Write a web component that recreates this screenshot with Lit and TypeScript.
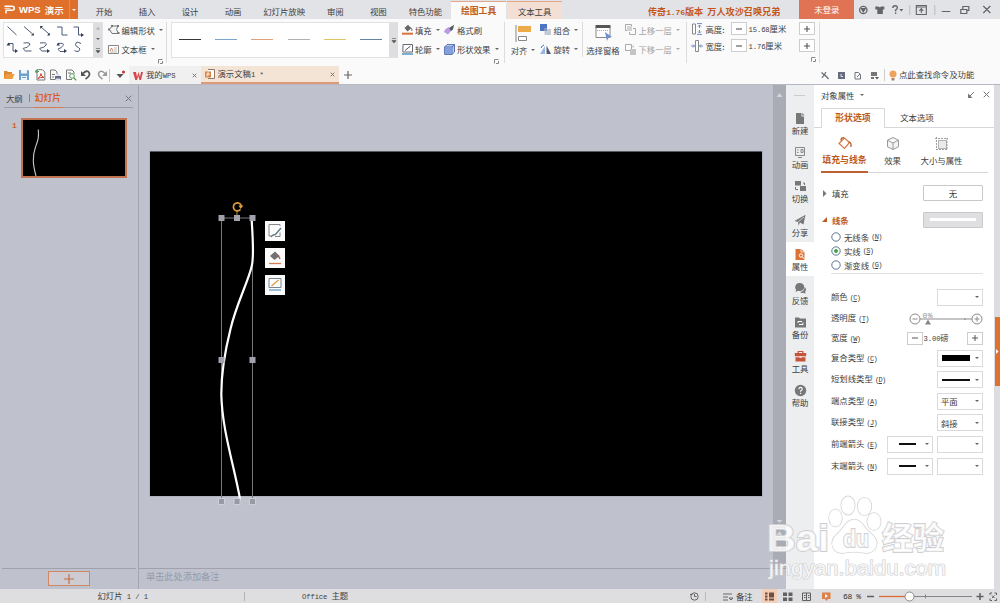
import { LitElement, html, svg, css } from "lit";
import { customElement } from "lit/decorators.js";
import { classMap } from "lit/directives/class-map.js";

const icon = (w: number, h: number, body: unknown) =>
  html`<svg class="ic" width=${w} height=${h} viewBox="0 0 ${w} ${h}">${body}</svg>`;
const caret = html`<i class="caret"></i>`;
const m = (text: string) => html`<span class="m">${text}</span>`;
const key = (k: string) => html`<span class="key">(<u>${k}</u>)</span>`;

const launcher = icon(5, 5, svg`<path d="M.5 4.5V.5h4M4.5 2v2.5H2" stroke="#888" fill="none"/>`);
const closeIcon = (s: number) => icon(s, s, svg`<path d="M.7 .7L${s - 0.7} ${s - 0.7}M${s - 0.7} .7L.7 ${s - 0.7}" stroke="#777" fill="none"/>`);
const bucket = svg`<path d="M2.5 4L6 .8l3.2 3.4L5.6 7.6z" fill="#666"/><path d="M8.5 3.5Q10.5 5 9.8 7" stroke="#666" fill="none"/>`;

const RIBBON_TABS = ["开始", "插入", "设计", "动画", "幻灯片放映", "审阅", "视图", "特色功能"];
const LINE_COLORS = ["#33363b", "#7ba6cb", "#dda37e", "#b0b0b0", "#dfc566", "#6283a3"];

const QUICK_ICONS = [
  svg`<path d="M1 10V2h3l1 1h4v2" fill="#d98a32"/><path d="M1 10L3 5h8.500L9.500 10z" fill="#ee9c3f"/>`,
  svg`<path d="M1 1h9l1 1v9H1z" fill="#6da0cd"/><path d="M3 1h6v3.500H3zM3 7h6v4H3z" fill="#eef5fb"/><path d="M4 8.500h4" stroke="#6da0cd"/>`,
  svg`<path d="M3 .7h5.500l2.300 2.300v8H3z" fill="#fff" stroke="#777"/><path d="M1 2.500h4M1 2.500l2-1.500v3z" stroke="#5a9e60" fill="#5a9e60"/><path d="M4 9.500Q7 7 7 4.500Q7 7.500 10 8.500Q6 8 4 9.500" stroke="#cf4635" fill="none"/>`,
  svg`<path d="M6 10.500H1.500V1H6l2 2v2M3 5.500h3M3 8h2" stroke="#777" fill="none"/><path d="M6 7h6v3.500H6z" fill="#646b85"/><path d="M7.500 5h3v2h-3zM7 9.500h4v2H7z" fill="#dfe2ec"/>`,
  svg`<path d="M7 10.500H1.500V1H7l2 2v2M3 4h3" stroke="#777" fill="none"/><circle cx="7" cy="7" r="2.300" fill="#fff" stroke="#579a5d"/><path d="M8.700 8.700l2.500 2.500" stroke="#579a5d" stroke-width="1.300"/>`,
  svg`<path d="M3 4.500Q7 .5 9 3.500T5.500 10" stroke="#555" stroke-width="1.800" fill="none"/><path d="M1 2v5h5z" fill="#555"/>`,
  svg`<path d="M9 4.500Q5 .5 3 3.500T6.500 10" stroke="#999" stroke-width="1.500" fill="none"/><path d="M11 2v5H6z" fill="#999"/>`,
];

const SIDE_ITEMS: { label: string; on?: boolean; art: unknown }[] = [
  { label: "新建", art: svg`<path d="M2 1h5.500v3.500H10V12H2z" fill="#777"/><path d="M8.300 .8L10.500 3.500H8.300z" fill="#777"/>` },
  { label: "动画", art: svg`<path d="M1.500 1.500h9v8h-9z" stroke="#888" fill="none"/><path d="M3 4h1.500M3 6.500h1.500M7 3.500h2v3H7zM4 11.500h4" stroke="#888" fill="none"/>` },
  { label: "切换", art: svg`<path d="M1 1h6v4.500H1z" fill="#777"/><path d="M6 6h6v5H6z" fill="#777"/><path d="M9 3h1.500v2M1.500 7v2.500H4" stroke="#777" fill="none"/>` },
  { label: "分享", art: svg`<path d="M.5 7L11.500 .8 9.500 10.500 6 8.500 4.500 11.500 4 8z" fill="#777"/><path d="M4 8L10 3" stroke="#eee" stroke-width=".7"/>` },
  { label: "属性", on: true, art: svg`<path d="M1.500 1h5.500l3.500 3v8h-9z" fill="#dd7238"/><path d="M7 1v3h3.500" stroke="#fff" stroke-width=".7" fill="none"/><circle cx="7" cy="7.500" r="1.700" stroke="#fff" fill="none"/><path d="M8.500 9l2.500 2.500" stroke="#fff"/>` },
  { label: "反馈", art: svg`<path d="M5.500 1a4.500 4 0 1 1-1.500 7.700L1.500 10l.6-2.500A4 4 0 0 1 5.500 1z" fill="#777"/><path d="M10.500 5q2.500 2 .7 4.700l.3 2-2-.9q-2 .5-3.500-.7 4.500-.6 4.500-5.100z" fill="#777"/>` },
  { label: "备份", art: svg`<path d="M1 1.500h4l1 1h6v9H1z" fill="#777"/><path d="M4 7V5.500h4M9 6.500V8.500H5" stroke="#fff" fill="none"/>` },
  { label: "工具", art: svg`<path d="M4.200 3V1.500h4.600V3" stroke="#c4543a" fill="none" stroke-width="1.200"/><path d="M.8 3h11.400v3.300H.8zM1.500 7.200h10v4.300h-10z" fill="#c4543a"/><path d="M5.500 6h2v2h-2z" fill="#f4d9d2"/>` },
  { label: "帮助", art: svg`<circle cx="6.500" cy="6.500" r="5.700" fill="#777"/><path d="M4.800 5.200Q5 3.400 6.600 3.400T8.300 5Q8.200 6 6.600 6.900v.9M6.600 8.700v1.400" stroke="#fff" fill="none" stroke-width="1.100"/>` },
];

@customElement("app-root")
export class AppRoot extends LitElement {
  static styles = css`
    :host { display: flex; flex-direction: column; width: 1000px; height: 603px; overflow: hidden; position: relative;
      font: 8.4px/12px "Noto Sans CJK SC", sans-serif; color: #3e3e40; background: #fafafa; white-space: nowrap; }
    * { box-sizing: border-box; }
    .ic { display: block; flex: none; overflow: visible; }
    .m { font-family: "Liberation Mono", "Noto Sans CJK SC", monospace; font-size: 7.2px; letter-spacing: -.1px; }
    .key { font-family: "Liberation Mono", monospace; font-size: 7px; letter-spacing: -.7px; margin-left: 2px; }
    .caret { display: block; flex: none; width: 0; height: 0; border: 2px solid transparent; border-top: 2.500px solid #666; border-bottom: 0; }
    .row, .titlebar, .tab { display: flex; align-items: center; }
    .dim { color: #a5a5a7; }
    .titlebar { height: 19px; flex: none; background: #e2e3e7; align-items: stretch; }
    .brand { width: 78px; margin-right: 4.500px; background: #df702b; color: #fff; display: flex; align-items: center; padding-left: 4px; gap: 4px; font-weight: 500; font-size: 9.500px; }
    .wps { font-family: "Liberation Sans", sans-serif; font-weight: 700; font-size: 9.500px; }
    .drop { width: 9px; height: 19px; margin-left: auto; border-left: 1px solid #e88a51; display: flex; align-items: center; justify-content: center; }
    .drop .caret { border-top-color: #fff; }
    .tab { min-width: 43px; padding: 2px 8.750px 0; justify-content: center; }
    .tool { width: 55.500px; padding: 0; margin-top: 1px; border-top: 1px solid #e3a688; background: #f4dfd5; margin-right: .5px; }
    .tool.on { background: #fafafa; color: #c05f20; font-weight: 700; font-size: 8.800px; }
    .promo { margin: 4px 0 0 85px; width: 151.500px; color: #c4561b; font-weight: 700; font-size: 9.150px; line-height: 14px; }
    .promo .m { font-size: 8px; }
    .login { width: 55px; background: #e07354; color: #fff; display: flex; align-items: center; justify-content: center; padding-bottom: 2px; }
    .win { flex: 1; }
    .ribbon { height: 47px; flex: none; display: flex; align-items: flex-start; padding-top: 3px; }
    .sep { width: 1px; height: 41px; background: #dcdcde; flex: none; }
    .sep.short { height: 35px; }
    .gallery { display: flex; height: 36px; border: 1px solid #e2e2e4; background: #fff; margin-left: 3px; width: 100px; justify-content: space-between; }
    .spin { width: 9px; flex: none; background: #dedee0; display: flex; flex-direction: column; align-items: center; justify-content: space-around; }
    .grp { display: grid; grid-template-rows: 15.500px 23px 4px; align-items: center; }
    .grp .row { height: 16px; }
    .grp .row .ic { margin-right: 3px; }
    .grp .caret { margin-left: 4px; }
    .shape { width: 63px; padding-left: 4.500px; }
    .shape > .ic { margin-left: 50px; margin-top: -3px; }
    .lines { display: flex; align-items: center; width: 227px; height: 36px; background: #fff; border: 1px solid #e2e2e4; margin-left: 4px; padding-left: 7px; gap: 14.200px; }
    .lines .spin { margin-left: -7px; height: 34px; justify-content: center; }
    .fmt { grid-template-columns: 42px 60px; padding-left: 3.500px; }
    .fmt > .ic { grid-column: 2; margin-left: 50px; margin-top: -3px; }
    .fmt .row .ic { margin-right: 2.500px; }
    .big { display: flex; flex-direction: column; align-items: center; padding-top: 2px; }
    .big .row { margin-top: 2px; gap: 4px; height: 12px; }
    .align { width: 29px; margin-left: 4px; }
    .pane { width: 37px; margin-left: 2px; }
    .comb { width: 44px; padding-left: 2px; }
    .layer { width: 64px; padding-left: 3px; }
    .layer .caret { border-top-color: #aaa; }
    .size { display: grid; grid-template-columns: 14px 25px 18px 50px 17px; grid-template-rows: 13px 4px 13px; width: 132px; padding-left: 5px; align-items: center; }
    .size .gap { grid-column: 1 / -1; height: 4px; }
    .step { width: 16px; height: 12.500px; border: 1px solid #cdcdcf; background: #fff; display: flex; align-items: center; justify-content: center; }
    .size .la { grid-column: 5; margin: 5px 0 0 12px; }
    .quick { height: 19px; flex: none; display: flex; align-items: center; border-bottom: 1px solid #b5b7c2; }
    .qi { display: flex; width: 109px; padding-left: 2.500px; gap: 3.500px; }
    .bar { width: 1px; height: 13px; background: #c8c8ca; flex: none; }
    .doc { display: flex; align-items: center; height: 18px; gap: 3px; background: #f0f0f1; width: 71.500px; padding: 0 4px; }
    .doc > .ic:last-child { margin-left: auto; }
    .doc.on { background: #f4e4d6; width: 138.500px; border-bottom: 2px solid #dd9a78; height: 18.500px; }
    .find { margin-left: auto; display: flex; align-items: center; width: 181px; line-height: 10px; }
    .find span { padding-bottom: 2px; }
    .main { flex: 1; display: flex; background: #bfc2cd; min-height: 0; }
    .left { width: 139px; border-right: 1px solid #a3a6b1; display: flex; flex-direction: column; }
    .ltabs { display: flex; height: 22.500px; margin: 0 5px 0 4px; border-bottom: 1px solid #9a9da8; padding: 7px 0 0 2px; }
    .ltabs .div { width: 1px; height: 8px; margin: 2px 4px 0 6px; background: #888; }
    .ltabs b { color: #d8602a; height: 15.500px; border-bottom: 1.500px solid #d87a4d; width: 29px; padding-left: 1px; font-size: 8.700px; }
    .ltabs .ic { margin: 3px 1px 0 auto; }
    .thumbs { flex: 1; display: flex; padding: 10px 0 0 12px; gap: 4px; color: #cf6232; }
    .thumbs .m { font-size: 8px; margin-top: 2px; height: 12px; font-weight: 700; }
    .add { height: 21.500px; margin: 0 2px; border-top: 1px solid #9fa2ad; display: flex; justify-content: center; align-items: center; }
    .add div { width: 42px; height: 15px; border: 1px solid #cf8764; background: #ccccd2; display: flex; align-items: center; justify-content: center; }
    .center { width: 647px; display: flex; flex-direction: column; }
    .work { display: flex; height: 482.500px; }
    .stage { display: block; }
    .notes { flex: 1; border-top: 1px solid #9fa2ad; padding: 1px 7px; color: #959aa8; font-size: 9.200px; }
    .side { width: 28px; background: #eceef0; display: flex; flex-direction: column; }
    .grip { height: 21px; padding: 10px 8px; }
    .grip i { display: block; height: 1px; background: #ccc; width: 11px; }
    .si { height: 34px; display: flex; flex-direction: column; align-items: center; padding-top: 6px; line-height: 13px; }
    .si.on { background: #fff; }
    .panel { width: 180px; background: #fff; padding-left: 7px; }
    .ph { display: flex; height: 22.500px; padding: 0 4px 3px 0; align-items: center; }
    .ph .caret { margin: 0 auto 0 5px; }
    .ph .ic + .ic { margin-left: 9px; }
    .ptabs { display: flex; margin-left: -7px; padding-left: 7px; height: 20.500px; border-bottom: 1px solid #d8d8da; }
    .pt { width: 64px; height: 20.500px; text-align: center; line-height: 19px; }
    .pt.on { border: 1px solid #d8d8da; border-bottom: 0; background: #fff; color: #bd5a1d; font-weight: 700; font-size: 8.900px; line-height: 18px; }
    .cats { display: flex; height: 45px; border-bottom: 1px solid #d5d5d7; margin-right: 6px; padding-top: 9px; }
    .cat { display: flex; flex-direction: column; align-items: center; gap: 3.500px; height: 36px; width: 49px; }
    .cat.on { color: #bd5a1d; font-weight: 700; width: 47px; border-bottom: 2px solid #bd6233; font-size: 8.900px; }
    .sect { display: flex; align-items: center; padding: 0 11px 0 1px; height: 16px; margin-top: 12px; gap: 5px; }
    .sect + .sect { margin-top: 10.500px; }
    .sect.on { color: #bd5a1d; font-weight: 700; }
    .pick { margin-left: auto; width: 60px; height: 16px; border: 1px solid #c9c9cb; border-radius: 1px; display: flex; align-items: center; justify-content: center; }
    .pick.fill { background: #dfdfe1; }
    .pick i { width: 46px; height: 3px; background: #fff; }
    .radios { margin: 2.500px 11px 0 10px; border-bottom: 1px solid #e0e0e2; height: 44px; }
    .radio { display: flex; align-items: center; height: 13.900px; }
    .radio .ic { margin-right: 3px; }
    .fields { padding: 12.500px 11px 0 10px; }
    .f { height: 21.600px; display: flex; align-items: center; }
    .f > :first-child { padding-bottom: 1px; }
    .f.low { height: 17.600px; }
    .f > :nth-child(2) { margin-left: auto; }
    .sel { width: 46px; height: 17px; border: 1px solid #dadadc; display: flex; align-items: center; padding: 0 3px 0 3px; }
    .sel + .sel { margin-left: 4px; }
    .sel .caret { margin-left: auto; }
    .sel i.l { height: 2px; width: 17px; background: #111; margin-left: 8px; }
    .sel i.l.w { width: 28px; margin-left: 1px; }
    .sel i.l.t { height: 6px; width: 28px; margin-left: 1px; background: #000; }
    .width { display: flex; align-items: center; width: 76.500px; }
    .width > span { margin: 0 auto 0 1px; }
    .edge { width: 6px; background: #dcdde0; padding: 232px 0 0 1px; }
    .edge div { height: 69px; background: #e0702f; display: flex; align-items: center; }
    .status { height: 14px; flex: none; background: #dedee0; display: flex; align-items: center; }
    .status .bar { height: 9px; background: #b4b4b8; }
    .pages { width: 244px; padding-left: 97.500px; }
    .theme { width: 443px; padding-left: 57px; }
    .zoomset { flex: 1; }
    .mark { position: absolute; left: 760px; top: 490px; pointer-events: none; }
    .wm { font-family: "Liberation Sans", "Noto Sans CJK SC", sans-serif; font-weight: 700; }
    .wl { font-family: "Liberation Sans", sans-serif; }
    .num { font-family: "Liberation Mono", monospace; font-size: 8px; }
  `;

  titlebar() {
    return html`<div class="titlebar">
      <div class="brand">
        ${icon(11, 9, svg`<path d="M.5 1.200h7.500q2.300 0 2.300 2t-2.300 2H2v3.300" stroke="#fff" stroke-width="1.500" fill="none"/><path d="M.5 3.300h6" stroke="#fff" stroke-width=".8"/>`)}
        <span class="wps">WPS</span><span>演示</span><div class="drop">${caret}</div>
      </div>
      ${RIBBON_TABS.map((t) => html`<div class="tab">${t}</div>`)}
      <div class="tab tool on">绘图工具</div><div class="tab tool">文本工具</div>
      <div class="promo">传奇${m("1.76")}版本 &nbsp;万人攻沙召唤兄弟</div>
      <div class="login">未登录</div>
      <svg class="win" width="145" height="19" viewBox="855 0 145 19" fill="none" stroke="#626468">
        <circle cx="864" cy="10" r="3.700" stroke-width="1.300"/><path d="M861 8h6l-3 5z" fill="#626468" stroke="none"/>
        <path d="M876 6.500h3q1.500 1.500 3 0h3v3h-1.500V14h-5.500V9.500H876z" fill="#626468" stroke="none"/>
        <path d="M893.500 8q0-2.300 2.300-2.300T898 8q0 1-1.700 2v1.500M896.300 12.500v1.500" stroke-width="1.400"/><path d="M900 9h4l-2 2.500z" fill="#626468" stroke="none"/>
        <path d="M910.500 5v10M935.500 5v10" stroke="#bbb"/>
        <path d="M917 5.500h10v9h-10zM917 7h10M922 13V9M920 11l2-2.300 2 2.300" stroke-width="1.100"/>
        <path d="M942.500 11.500h8.500M963.500 9.500V6.500h6v4h-2M961.500 9.500h6v4h-6zM984 6l7 7M991 6l-7 7" stroke-width="1.200"/>
      </svg>
    </div>`;
  }

  ribbon() {
    const step = (plus: boolean) => html`<div class="step">${icon(6, 6, svg`<path d="M0 3h6${plus ? "M3 0v6" : ""}" stroke="#555" stroke-width="1.100"/>`)}</div>`;
    return html`<div class="ribbon">
      <div class="gallery">
        <svg width="88" height="34" viewBox="4 23 88 34" fill="none" stroke="#4b5a78" stroke-width="1">
          <path d="M7.500 26.500l9 8.500M24 26.500l8.500 7.500M41 27l8 7M57 27h5v8h5.500M73.500 27h5v8h4M8.500 44v-1M9 43.500h4v7.500h3M23.500 43q8-1 6 2t-5 3 1 3h6M40 43q8-1 6 2t-5 3 1 3h5M58 43.500q7-1 5 2t-4 3 1 3h5M81 43.500q-5-3-5.500 1 0 2 3 3t0 4q-3 0-4-1"/>
          <g fill="#343c52" stroke="none"><path d="M34 35.500h-3l2.500-2.800zM50 35.500h-3l2.500-2.800zM40 26h3l-2.500 3zM81 33l3 2-3 2zM15 49l3 2-3 2zM6.500 45.500h4l-2-3zM47 49l3 2-3 2zM64 49l3 2-3 2zM56.500 45.500h3.500l-2-3z"/></g>
        </svg>
        <div class="spin">${icon(4, 3, svg`<path d="M0 2.500h4L2 0z" fill="#aaa"/>`)}${caret}${icon(4, 5, svg`<path d="M0 .5h4M0 2.500h4L2 5z" fill="#555" stroke="#555" stroke-width=".6"/>`)}</div>
      </div>
      <div class="grp shape">
        <div class="row">${icon(11, 9, svg`<path d="M1.500 4.500L4 1h6L8.500 4.500 10.500 8.500H4z" stroke="#777" fill="#f4f4f4"/><path d="M0 3.500h2v2H0zM3 0h2v2H3zM9 0h2v2H9zM9.500 7h2v2h-2z" fill="#777"/>`)}编辑形状${caret}</div>
        <div class="row">${icon(11, 9, svg`<path d="M.5 .5h10v8H.5z" stroke="#888" fill="#fff"/><path d="M2 6L3.500 3 5 6" stroke="#d5824f" fill="none"/><path d="M6 3h3M6 5h3M2 7h7" stroke="#bbb"/>`)}文本框${caret}</div>
        ${launcher}
      </div>
      <div class="sep"></div>
      <div class="lines">
        ${LINE_COLORS.map((c) => icon(22, 2, svg`<path d="M0 .5h22" stroke=${c} stroke-width="1"/>`))}
        <div class="spin">${icon(4, 5, svg`<path d="M0 .5h4M0 2.500h4L2 5z" fill="#555" stroke="#555" stroke-width=".6"/>`)}</div>
      </div>
      <div class="grp fmt">
        <div class="row">${icon(11, 11, svg`${bucket}<path d="M0 9.700h11" stroke="#d9733b" stroke-width="2"/>`)}填充${caret}</div>
        <div class="row">${icon(11, 11, svg`<path d="M1 5.500L4.500 3 7.500 6.500 4 10.500 0 8z" fill="#bb9be0"/><path d="M5 4L10 .7 9 5.500 7 7z" fill="#555a66"/>`)}格式刷</div>
        <div class="row">${icon(11, 11, svg`<path d="M1 .5h9.500V8H.8z" stroke="#667" fill="#fff"/><path d="M3 6.500L8.500 2" stroke="#555"/><path d="M0 10h11" stroke="#5b9cc8" stroke-width="1.600"/>`)}轮廓${caret}</div>
        <div class="row">${icon(11, 11, svg`<path d="M.6 3L3 .6h7.500V8L8 10.400H.6z" fill="#b9cdf2" stroke="#566fae"/><path d="M.6 3H8v7.400M8 3l2.500-2.400" stroke="#566fae" fill="none"/><path d="M1 3.400h6.600v6.600H1z" fill="#82a0df"/>`)}形状效果${caret}</div>
        ${launcher}
      </div>
      <div class="sep"></div>
      <div class="big align">${icon(17, 18, svg`<path d="M1 1v17" stroke="#888"/><path d="M3 2h13v6H3z" fill="#edab4b"/><path d="M3.500 12.500h8v4h-8z" fill="#fff" stroke="#888"/>`)}<div class="row">对齐${caret}</div></div>
      <div class="grp comb">
        <div class="row">${icon(11, 11, svg`<path d="M0 0h7v7H0z" fill="#4b74c5"/><path d="M4.500 5h6.500v6H4.500z" fill="#c5c9d4"/><path d="M4 4h3v3H4z" fill="#8196c7"/>`)}组合${caret}</div>
        <div class="row">${icon(11, 11, svg`<path d="M5 2v8H0z" fill="#97b4e4"/><path d="M6.500 1.500v8.500H11z" fill="#555e70"/><path d="M1 4Q2 1.500 4 1" stroke="#4b74c5" fill="none"/>`)}旋转${caret}</div>
      </div>
      <div class="sep short"></div>
      <div class="big pane">${icon(17, 18, svg`<path d="M1 3.500h14v10H1z" fill="#fff" stroke="#888"/><path d="M.5 2.500h15" stroke="#555" stroke-width="3"/><path d="M2 6.500h12" stroke="#aaa" stroke-dasharray="1 1"/><path d="M10 8l7 5-3.500.6L12 17z" fill="#6f8fd0"/>`)}<div class="row">选择窗格</div></div>
      <div class="grp layer dim">
        <div class="row">${icon(11, 11, svg`<path d="M.5 .5h6v6h-6zM8 4.500h2.500v6h-6V8" fill="none" stroke="#aaa"/><path d="M2 2h5v5H2z" fill="#d4d4d4"/>`)}上移一层${caret}</div>
        <div class="row">${icon(11, 11, svg`<path d="M.5 .5h6v6h-6z" fill="none" stroke="#aaa"/><path d="M5 5h6v6H5z" fill="#c4c4c4"/><path d="M8 1.500v2" stroke="#aaa"/>`)}下移一层${caret}</div>
      </div>
      <div class="sep"></div>
      <div class="size">
        ${icon(10, 12, svg`<path d="M.5 1h3v10h-3z" fill="#fff" stroke="#888"/><path d="M5 .6h5M5 11.400h5M7.500 2v3M7.500 7v3M6 3.500L7.500 2 9 3.500M6 8.500L7.500 10 9 8.500" fill="none" stroke="#6d8cc6"/>`)}<span>高度:</span>${step(false)}<span>${m("15.68")}厘米</span>${step(true)}
        <div class="gap"></div>
        ${icon(10, 12, svg`<path d="M3.500 .5h3v11h-3z" fill="#fff" stroke="#888"/><path d="M-1 6h3.500M11 6H7.500M1 4.500L2.500 6 1 7.500M9 4.500L7.500 6 9 7.500" fill="none" stroke="#6d8cc6"/>`)}<span>宽度:</span>${step(false)}<span>${m("1.76")}厘米</span>${step(true)}
        <div class="la">${launcher}</div>
      </div>
      <div class="sep"></div>
    </div>`;
  }

  quickbar() {
    return html`<div class="quick">
      <div class="qi">${QUICK_ICONS.map((a) => icon(12, 12, a))}</div>
      <div class="bar"></div>
      ${icon(19, 12, svg`<path d="M6.500 5h7L10 9z" fill="#555"/><circle cx="13.500" cy="3" r="1.600" fill="#c33a36"/>`)}
      <div class="doc">${icon(10, 9, svg`<path d="M0 1h3l1 5 1.500-5L7 6l1-5h2L8 9H6.500L5.300 5 4 9H2.300z" fill="#d5474b"/>`)}<span>我的${m("WPS")}</span>${closeIcon(5)}</div>
      <div class="doc on">${icon(10, 10, svg`<path d="M3 .5h6.500v9H3" fill="#fff" stroke="#8d7a6c"/><path d="M0 2.500h6v6H0z" fill="#d9823e"/><path d="M2 7.500V4h2v2H2M7 3h1.500M7 5h1.500" stroke="#fff" stroke-width=".8" fill="none"/>`)}<span>演示文稿${m("1 *")}</span>${closeIcon(5)}</div>
      ${icon(18, 10, svg`<path d="M5 5h8M9 1v8" stroke="#666" stroke-width="1.200"/>`)}
      <div class="find">
        <svg class="ic" width="80" height="13" viewBox="819 69 80 13" fill="none" stroke="#6e727a">
          <path d="M821.500 72.500l4 3.500M826 72l-4 6M825 75l3.500 4" stroke-width="1.300"/><path d="M838 72h7v7h-7z" fill="#666d80" stroke="none"/><path d="M841 74v2.500h2" stroke="#fff" stroke-width=".8"/>
          <path d="M855 72.500h3.500l2 2v4.500H855z"/><path d="M857 77l3-3"/><path d="M871 72h6v4h-6zM871 77h3v2h-3z" fill="#777" stroke="none"/><path d="M875 77h4l-2 2.500z" fill="#555" stroke="none"/>
          <path d="M884.500 69v12" stroke="#ccc"/><circle cx="893" cy="74" r="3.500" fill="#eda35c" stroke="none"/><path d="M891.500 78h3v2.500h-3z" fill="#a78668" stroke="none"/>
        </svg><span>点此查找命令及功能</span>
      </div>
    </div>`;
  }

  left() {
    return html`<div class="left">
      <div class="ltabs">大纲<i class="div"></i><b>幻灯片</b>${closeIcon(7)}</div>
      <div class="thumbs">${m("1")}
        <svg width="106" height="60" viewBox="0 0 106 60"><path d="M0 0h106v60H0z" fill="#c37553"/><path d="M2 2h102v56H2z" fill="#000"/><path d="M17.300 11.500C18 20 17 22 14.500 29C11 39 12 47 15 58" stroke="#c8c8c0" stroke-width="1.100" fill="none"/></svg>
      </div>
      <div class="add"><div>${icon(10, 10, svg`<path d="M0 5h10M5 0v10" stroke="#c46f47" stroke-width="1.200"/>`)}</div></div>
    </div>`;
  }

  center() {
    const handles = [[221.5, 218], [237, 218], [252.5, 218], [221.5, 360], [252.5, 360], [221.5, 501.5], [237, 501.5], [252.5, 501.5]];
    return html`<div class="center">
      <div class="work">
        <svg class="stage" width="634" height="482.5" viewBox="139 85 634 482.5">
          <path d="M149 151h614v346H149z" fill="#b1b4bf"/><path d="M150 151.500h612v344.500H150z" fill="#000"/>
          <path d="M221.500 501.500V218h31v283.500" fill="none" stroke="#77777b"/>
          <path d="M251.500 218C252.500 233 254.500 257 251.500 267C248 282 236 305 230.500 329C226 347 221.300 374 221.300 394C222 430 234 465 240.200 500" fill="none" stroke="#fff" stroke-width="2.200"/>
          <path d="M237 216v-5" stroke="#bd8335"/><path d="M240.500 209.500A4 4 0 1 1 241.300 206" fill="none" stroke="#df9d40" stroke-width="1.700"/><path d="M238.500 205.500h5l-3 3.500z" fill="#df9d40"/>
          ${handles.map(([x, y]) => svg`<rect x=${x - 3} y=${y - 3} width="6" height="6" fill=${y > 500 ? "#979aa5" : "#a2a2ac"} stroke=${y > 500 ? "#cbced7" : "none"}/>`)}
          ${[221, 248, 275].map((y) => svg`<rect x="265" y=${y} width="20" height="20" fill="#fbfbfb"/>`)}
          <path d="M280 226v-1.500h-11V236h3M275 236.500h5v-4" fill="none" stroke="#888"/><path d="M275 235l6-7M271 237q2-3 4-2" stroke="#607580" stroke-width="1.300" fill="none"/>
          <path d="M270 256l5-4.500 4.500 4.500-5 4z" fill="#707075"/><path d="M278 255l2 4" stroke="#a56457" stroke-width="1.500"/><path d="M269 263.500h12" stroke="#d77b50" stroke-width="1.300"/>
          <path d="M269 278.500h12v9h-12z" fill="none" stroke="#7b8790"/><path d="M271.500 286l7-6" stroke="#e0a346" stroke-width="1.500"/><path d="M269 290h12" stroke="#659cc1" stroke-width="1.300"/>
        </svg>
        <svg width="13" height="482.5" viewBox="773 85 13 482.5"><path d="M773 85h13v482.500h-13z" fill="#a9abb5"/><path d="M776.500 97h6l-3-4zM776.500 535h6l-3-4zM776.500 546h6l-3 4zM776.500 520h6l-3 3z" fill="#d4d5da"/></svg>
      </div>
      <div class="notes">单击此处添加备注</div>
    </div>`;
  }

  panel() {
    const select = (body: unknown) => html`<div class="sel">${body}${caret}</div>`;
    const field = (label: string, k: string, body: unknown, low = false) =>
      html`<div class=${classMap({ f: true, low })}><span>${label}${key(k)}</span>${body}</div>`;
    const bar = (c: string) => html`<i class="l ${c}"></i>`;
    const stepper = (plus: boolean) => html`<div class="step">${icon(6, 6, svg`<path d="M0 3h6${plus ? "M3 0v6" : ""}" stroke="#555"/>`)}</div>`;
    return html`<div class="panel">
      <div class="ph">对象属性${caret}${icon(6, 6, svg`<path d="M6 0L1.500 4.500" stroke="#777"/><path d="M0 1.500V6h4.500z" fill="#777"/>`)}${closeIcon(7)}</div>
      <div class="ptabs"><div class="pt on">形状选项</div><div class="pt">文本选项</div></div>
      <div class="cats">
        <div class="cat on">${icon(14, 13, svg`<path d="M1 6.500L6.500 1l5 4.500-5 6z" fill="none" stroke="#d17b46" stroke-width="1.200"/><path d="M3 3.500Q3 .5 6 .7M10.500 4.500Q14 6 12.800 10" fill="none" stroke="#bd5a1d" stroke-width="1.300"/>`)}<span>填充与线条</span></div>
        <div class="cat">${icon(12, 13, svg`<path d="M6 .5l5.500 2.700v6.600L6 12.500.5 9.800V3.200zM.5 3.200L6 6l5.500-2.800M6 6v6.500" fill="#f4f4f4" stroke="#999"/>`)}<span>效果</span></div>
        <div class="cat">${icon(13, 13, svg`<path d="M3.500 3.500h8v8h-8z" fill="#eaeaea" stroke="#777" stroke-dasharray="1 1"/><path d="M1.500 0v13M0 1.500h13M12 1v12M1 12.500h12" stroke="#888" fill="none" stroke-width=".8" stroke-dasharray="2 1"/>`)}<span>大小与属性</span></div>
      </div>
      <div class="sect">${icon(5, 7, svg`<path d="M1 0l3.500 3.500L1 7z" fill="#777"/>`)}填充<div class="pick">无</div></div>
      <div class="sect on">${icon(5, 7, svg`<path d="M5 1v5H0z" fill="#bd5a1d"/>`)}线条<div class="pick fill"><i></i></div></div>
      <div class="radios">
        ${[["无线条", "N"], ["实线", "S"], ["渐变线", "G"]].map(([l, k], i) => html`<div class="radio">${icon(10, 10, svg`<circle cx="5" cy="5" r="4.200" fill="#fff" stroke="#5d7a91"/>${i === 1 ? svg`<circle cx="5" cy="5" r="1.900" fill="#3aa03f"/>` : ""}`)}${l}${key(k)}</div>`)}
      </div>
      <div class="fields">
        ${field("颜色", "C", select(""))}
        ${field("透明度", "T", html`<svg class="ic" width="75" height="16" viewBox="0 0 75 16" fill="none" stroke="#8b8b8d"><circle cx="7" cy="8" r="5"/><circle cx="69" cy="8" r="5"/><path d="M4.500 8h5M66.500 8h5M69 5.500v5M12 8h52M57 7v2" /><path d="M20 8.500l3 5h-6z" fill="#858587" stroke="none"/><text class="num" x="14.500" y="7" textLength="10" fill="#929294" stroke="none">0%</text></svg>`)}
        ${field("宽度", "W", html`<div class="width">${stepper(false)}<span>${m("3.00")}磅</span>${stepper(true)}</div>`, true)}
        ${field("复合类型", "C", select(bar("t")))}
        ${field("短划线类型", "D", select(bar("w")))}
        ${field("端点类型", "A", select("平面"))}
        ${field("联接类型", "J", select("斜接"))}
        ${field("前端箭头", "E", html`${select(bar(""))}${select("")}`)}
        ${field("末端箭头", "N", html`${select(bar(""))}${select("")}`)}
      </div>
    </div>`;
  }

  status() {
    return html`<div class="status">
      <div class="pages">幻灯片${m(" 1 / 1")}</div><div class="bar"></div>
      <div class="theme">${m("Office ")}主题</div>
      <svg class="ic" width="48" height="14" viewBox="688 589 48 14" fill="none" stroke="#666"><circle cx="694.500" cy="596.500" r="3.700"/><path d="M694.500 594v2.500h2.200M690 594.500h2.500"/><path d="M705.500 592v9" stroke="#bbb"/><path d="M723 594h9M723 597h5M723 600h5M729 598h4l-2 2z"/></svg>
      <span>备注</span>
      <svg class="zoomset" height="14" viewBox="753 589 247 14" preserveAspectRatio="xMinYMid meet" fill="none" stroke="#5f5f61">
        <path d="M762 589h15v14h-15z" fill="#f2cdb8" stroke="none"/>
        <path d="M765 592.500h2.500v2H765zM765 595.500h2.500v2H765zM765 598.500h2.500v2H765zM769 592.500h5v5h-5zM769 598.500h5v2h-5z" fill="#704f40" stroke="none"/>
        <path d="M783 592.500h4v3.500h-4zM788.500 592.500h4v3.500h-4zM783 597.500h4v3.500h-4zM788.500 597.500h4v3.500h-4z" fill="#606062" stroke="none"/>
        <path d="M802.500 593h4v7.500h-4zM806.500 593h4v7.500h-4zM804 595.500h1.500M804 597.500h1.500M808 595.500h1.500M808 597.500h1.500"/>
        <path d="M822 592.500h8.500v6.500h-2.500l-1.500 2-1.500-2h-3z" fill="#dc8149" stroke="none"/><path d="M825 594l3 2-3 2z" fill="#fff" stroke="none"/>
        <text class="num" x="843" y="599" textLength="18" fill="#333" stroke="none">68 %</text>
        <path d="M867 596.500h7M976.500 596.500h7M980 593v7" stroke-width="1.500"/><path d="M909 596.500h63M925.500 594.500v4" stroke="#858587"/><path d="M879 596.500h30" stroke="#dd6c38" stroke-width="1.300"/>
        <circle cx="909.500" cy="596.500" r="4.500" fill="#fff" stroke="#8a8a8c"/>
        <path d="M990 595v-2h2M994.500 593h2v2M996.500 598.500v2h-2M992 600.500h-2v-2M992 595.500l2.500 2.500M994.500 595.500L992 598"/>
      </svg>
    </div>`;
  }

  watermark() {
    return html`<svg class="mark" width="190" height="95" viewBox="760 490 190 95" fill="#fff" fill-opacity=".8" stroke="#cfcfd3" stroke-width="1.800" paint-order="stroke">
      <text class="wm" x="767" y="551" font-size="37" textLength="62" lengthAdjust="spacingAndGlyphs">Bai</text>
      <g stroke-width="1.200"><ellipse cx="835.500" cy="518" rx="6.500" ry="8.700"/><ellipse cx="848" cy="505.500" rx="6.800" ry="9.300"/><ellipse cx="864.500" cy="506.500" rx="7" ry="9"/><ellipse cx="874" cy="521.500" rx="6.800" ry="8.700"/>
      <path d="M854.500 519.500C862 519.500 864 528 871 533.500C882 542 876 554 865 553Q854.500 551 844 553C832 554 828 542 837 534C844 528 846 519.500 854.500 519.500Z"/></g>
      <text class="wm" x="843" y="547" font-size="24" textLength="26" lengthAdjust="spacingAndGlyphs">du</text>
      <text class="wm" x="882" y="548.5" font-size="31" textLength="62" lengthAdjust="spacingAndGlyphs">经验</text>
      <text class="wl" x="769" y="575" font-size="19.5" textLength="177" lengthAdjust="spacingAndGlyphs" stroke-width="1.200">jingyan.baidu.com</text>
    </svg>`;
  }

  render() {
    return html`${this.titlebar()}${this.ribbon()}${this.quickbar()}
      <div class="main">
        ${this.left()}${this.center()}
        <div class="side"><div class="grip"><i></i></div>
          ${SIDE_ITEMS.map((s) => html`<div class=${classMap({ si: true, on: !!s.on })}>${icon(12, 12, s.art)}<span>${s.label}</span></div>`)}
        </div>
        ${this.panel()}
        <div class="edge"><div>${icon(4, 5, svg`<path d="M1 0l2.500 2.500L1 5z" fill="#fff"/>`)}</div></div>
      </div>
      ${this.status()}${this.watermark()}`;
  }
}
